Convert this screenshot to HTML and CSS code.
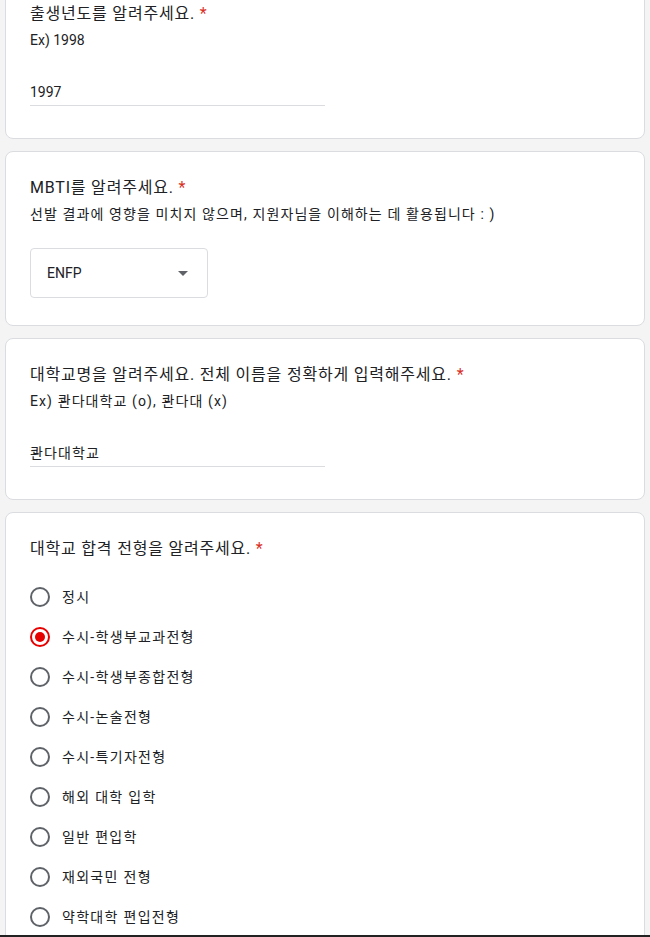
FILE: index.html
```html
<!DOCTYPE html>
<html lang="ko">
<head>
<meta charset="utf-8">
<link rel="stylesheet" href="styles.css">
</head>
<body>
<main class="form">
  <section class="card">
    <div class="q-title">출생년도를 알려주세요. <span class="req">*</span></div>
    <div class="q-desc">Ex) 1998</div>
    <div class="text-input">1997</div>
  </section>

  <section class="card">
    <div class="q-title">MBTI를 알려주세요. <span class="req">*</span></div>
    <div class="q-desc ko">선발 결과에 영향을 미치지 않으며, 지원자님을 이해하는 데 활용됩니다 : )</div>
    <div class="select">
      <span class="select-value">ENFP</span>
      <span class="select-arrow"></span>
    </div>
  </section>

  <section class="card">
    <div class="q-title">대학교명을 알려주세요. 전체 이름을 정확하게 입력해주세요. <span class="req">*</span></div>
    <div class="q-desc ko">Ex) 콴다대학교 (o), 콴다대 (x)</div>
    <div class="text-input ko">콴다대학교</div>
  </section>

  <section class="card">
    <div class="q-title">대학교 합격 전형을 알려주세요. <span class="req">*</span></div>
    <div class="options">
      <div class="option"><span class="radio"></span><span class="opt-label">정시</span></div>
      <div class="option"><span class="radio checked"></span><span class="opt-label">수시-학생부교과전형</span></div>
      <div class="option"><span class="radio"></span><span class="opt-label">수시-학생부종합전형</span></div>
      <div class="option"><span class="radio"></span><span class="opt-label">수시-논술전형</span></div>
      <div class="option"><span class="radio"></span><span class="opt-label">수시-특기자전형</span></div>
      <div class="option"><span class="radio"></span><span class="opt-label">해외 대학 입학</span></div>
      <div class="option"><span class="radio"></span><span class="opt-label">일반 편입학</span></div>
      <div class="option"><span class="radio"></span><span class="opt-label">재외국민 전형</span></div>
      <div class="option"><span class="radio"></span><span class="opt-label">약학대학 편입전형</span></div>
    </div>
  </section>
</main>
<div class="bottom-edge"></div>
</body>
</html>
```

FILE: styles.css
```css
html, body {
  margin: 0;
  padding: 0;
  background: #f4f4f4;
  overflow: hidden;
  height: 937px;
}

body {
  font-family: Roboto, "Noto Sans CJK KR", "Noto Sans", sans-serif;
  color: #202124;
}

.form {
  display: flex;
  flex-direction: column;
  gap: 12px;
  padding: 0 5px;
  margin-top: -23px;
}

.card {
  background: #fff;
  border: 1px solid #dadce0;
  border-radius: 8px;
  padding: 24px;
  display: flex;
  flex-direction: column;
  align-items: flex-start;
}

.q-title {
  font-size: 16px;
  line-height: 24px;
  letter-spacing: 0.8px;
}

.req {
  color: #d93025;
}

.q-desc {
  font-size: 14px;
  line-height: 20px;
  margin-top: 4px;
}

.ko {
  letter-spacing: 1.1px;
}

.text-input {
  margin-top: 24px;
  margin-bottom: 8px;
  width: 295px;
  font-size: 14px;
  line-height: 20px;
  padding: 8px 0 3px;
  border-bottom: 1px solid #dadce0;
}

.select {
  margin-top: 24px;
  margin-bottom: 3px;
  width: 141px;
  height: 48px;
  border: 1px solid #dadce0;
  border-radius: 4px;
  display: flex;
  align-items: center;
  justify-content: space-between;
  padding: 0 19px 0 16px;
}

.select-value {
  font-size: 14px;
  line-height: 20px;
}

.select-arrow {
  width: 0;
  height: 0;
  border-left: 5px solid transparent;
  border-right: 5px solid transparent;
  border-top: 5px solid #5f6368;
}

.options {
  margin-top: 16px;
  display: flex;
  flex-direction: column;
}

.option {
  height: 40px;
  display: flex;
  align-items: center;
  gap: 12px;
}

.radio {
  width: 16px;
  height: 16px;
  border: 2px solid #5f6368;
  border-radius: 50%;
  display: flex;
  align-items: center;
  justify-content: center;
}

.radio.checked {
  border-color: #e60000;
}

.radio.checked::after {
  content: "";
  width: 10px;
  height: 10px;
  border-radius: 50%;
  background: #e60000;
}

.opt-label {
  font-size: 14px;
  line-height: 20px;
  letter-spacing: 1.3px;
}

.bottom-edge {
  position: fixed;
  left: 0;
  right: 0;
  bottom: 0;
  height: 2px;
  background: #222;
}
```
